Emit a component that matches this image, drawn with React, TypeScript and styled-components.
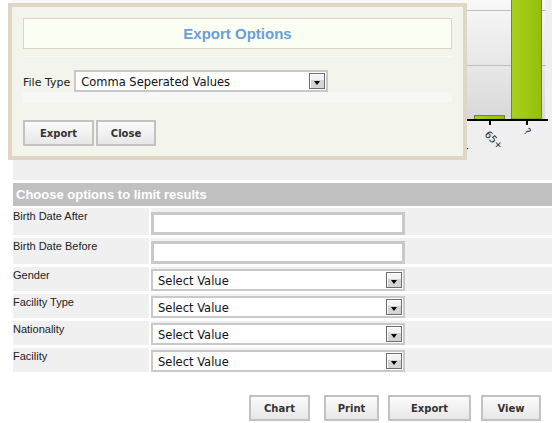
import React from 'react';
import styled, { createGlobalStyle } from 'styled-components';

const GlobalStyle = createGlobalStyle`
  body {
    margin: 0;
    background: #fff;
    font-family: "Liberation Sans", Arial, sans-serif;
  }
`

const Page = styled.div`
  position: relative;
  width: 552px;
`

const ChartBox = styled.div`
  height: 180px;
  margin-left: 13px;
  background: #efefef;
  overflow: hidden;

  svg {
    display: block;
  }
`

const Modal = styled.div`
  position: absolute;
  left: 8px;
  top: 3px;
  width: 459px;
  height: 157px;
  box-sizing: border-box;
  border: 4px solid #e1d6c5;
  background: #f3f4ec;
  padding: 11px 11px 0;
`

const TitleBox = styled.div`
  height: 31px;
  box-sizing: border-box;
  border: 1px solid #ddd4c4;
  background: #fbfef2;
  text-align: center;
  line-height: 29px;
  font-size: 15px;
  font-weight: bold;
  color: #6a9fd8;
`

const Divider = styled.div`
  height: 1px;
  margin-top: 7px;
  background: #f9f9f6;
`

const FileRow = styled.div`
  display: flex;
  align-items: center;
  margin-top: 13px;
`

const FileLabel = styled.span`
  font-family: "DejaVu Sans", Verdana, sans-serif;
  font-size: 11px;
  color: #222;
  margin-right: 4px;
  padding-top: 2px;
`

const Band = styled.div`
  height: 10px;
  background: #f7f7f7;
`

const ModalActions = styled.div`
  display: flex;
  gap: 2px;
  margin-top: 18px;
`

const Button = styled.button<{ $w: number; $gap?: number }>`
  width: ${p => p.$w}px;
  height: 26px;
  margin-left: ${p => p.$gap || 0}px;
  padding: 0;
  box-sizing: border-box;
  border: 2px solid #c2c2c2;
  background: linear-gradient(#fbfbfb, #e7e7e7);
  font-family: "DejaVu Sans", Verdana, sans-serif;
  font-size: 10px;
  font-weight: bold;
  color: #333;
`

const SelectBox = styled.div<{ $w: number; $h: number }>`
  position: relative;
  display: flex;
  align-items: center;
  width: ${p => p.$w}px;
  height: ${p => p.$h}px;
  box-sizing: border-box;
  border: 2px solid #c9c9c9;
  background: #fff;
  padding: 2px 0 0 5px;
  font-family: "DejaVu Sans", Verdana, sans-serif;
  font-size: 11.5px;
  color: #111;
`

const ArrowButton = styled.span`
  position: absolute;
  right: 1px;
  top: 1px;
  width: 16px;
  height: 16px;
  box-sizing: border-box;
  border: 1px solid #6e6e6e;
  box-shadow: inset 1px 1px 0 #fff;
  background: linear-gradient(#f3f3f3 0 40%, #d5d5d5 40%);
  display: flex;
  justify-content: center;
  align-items: flex-end;
  padding-bottom: 3px;

  &::after {
    content: '';
    border-left: 3px solid transparent;
    border-right: 3px solid transparent;
    border-top: 4px solid #000;
  }
`

const Header = styled.div`
  margin: 3px 0 0 13px;
  height: 23px;
  line-height: 23px;
  padding-left: 3px;
  background: #c0c0c0;
  color: #fff;
  font-size: 13px;
  font-weight: bold;
`

const Grid = styled.div`
  display: grid;
  grid-template-columns: 136px 1fr;
  column-gap: 2px;
  row-gap: 3px;
  margin: 2px 0 0 13px;
`

const Label = styled.div<{ $h: number }>`
  height: ${p => p.$h}px;
  background: #f0f0f0;
  padding-top: 2px;
  box-sizing: border-box;
  font-size: 11px;
  line-height: 13px;
  color: #222;
`

const Value = styled.div<{ $h: number; $pad: number }>`
  height: ${p => p.$h}px;
  background: #f0f0f0;
  padding-top: ${p => p.$pad}px;
  box-sizing: border-box;
`

const TextInput = styled.input`
  display: block;
  width: 254px;
  height: 23px;
  box-sizing: border-box;
  border: 3px solid #c9c9c9;
  background: #fff;
  margin: 0;
  outline: none;
`

const Actions = styled.div`
  display: flex;
  justify-content: flex-end;
  margin-top: 23px;
  padding-right: 11px;
`

const Select = ({ text, w, h }: { text: string; w: number; h: number }) => (
  <SelectBox $w={w} $h={h}>
    {text}
    <ArrowButton />
  </SelectBox>
)

const Chart = () => (
  <svg width={539} height={180}>
    <defs>
      <linearGradient id="plot" x1="0" y1="0" x2="0" y2="1">
        <stop offset="0" stopColor="#f8f8f8" />
        <stop offset="1" stopColor="#d9d9d9" />
      </linearGradient>
      <linearGradient id="bar" x1="0" y1="0" x2="1" y2="0">
        <stop offset="0" stopColor="#a8d11c" />
        <stop offset="1" stopColor="#93bf0c" />
      </linearGradient>
    </defs>
    <rect x={0} y={0} width={532} height={119} fill="url(#plot)" />
    <line x1={0} y1={10.5} x2={533} y2={10.5} stroke="#bdbdbd" />
    <line x1={0} y1={65.5} x2={533} y2={65.5} stroke="#bdbdbd" />
    <rect x={461.5} y={115.5} width={30} height={4} fill="url(#bar)" stroke="#6d8a25" />
    <rect x={498.5} y={-1} width={30} height={120} fill="url(#bar)" stroke="#6d8a25" />
    <rect x={0} y={119} width={535} height={2} fill="#000" />
    <rect x={476} y={121} width={2} height={4} fill="#000" />
    <rect x={513} y={121} width={2} height={4} fill="#000" />
    <text x={471} y={135} fontSize={10} fontFamily="DejaVu Sans, sans-serif" fill="#222" transform="rotate(45 471 135)">65+</text>
    <text x={510} y={132} fontSize={10} fontFamily="DejaVu Sans, sans-serif" fill="#222" transform="rotate(45 510 132)">?</text>
    <circle cx={454.5} cy={148.5} r={0.8} fill="#333" />
  </svg>
)

const rows = [
  { label: 'Birth Date After', kind: 'input', h: 27, pad: 4 },
  { label: 'Birth Date Before', kind: 'input', h: 26, pad: 3 },
  { label: 'Gender', kind: 'select', h: 24, pad: 2 },
  { label: 'Facility Type', kind: 'select', h: 24, pad: 2 },
  { label: 'Nationality', kind: 'select', h: 24, pad: 2 },
  { label: 'Facility', kind: 'select', h: 24, pad: 2 },
]

const App: React.FC = () => (
  <Page>
    <GlobalStyle />
    <ChartBox>
      <Chart />
    </ChartBox>

    <Modal>
      <TitleBox>Export Options</TitleBox>
      <Divider />
      <FileRow>
        <FileLabel>File Type</FileLabel>
        <Select text="Comma Seperated Values" w={254} h={22} />
      </FileRow>
      <Band />
      <ModalActions>
        <Button $w={71}>Export</Button>
        <Button $w={60}>Close</Button>
      </ModalActions>
    </Modal>

    <Header>Choose options to limit results</Header>
    <Grid>
      {rows.map(r => (
        <React.Fragment key={r.label}>
          <Label $h={r.h}>{r.label}</Label>
          <Value $h={r.h} $pad={r.pad}>
            {r.kind === 'input'
              ? <TextInput type="text" />
              : <Select text="Select Value" w={254} h={22} />}
          </Value>
        </React.Fragment>
      ))}
    </Grid>

    <Actions>
      <Button $w={61}>Chart</Button>
      <Button $w={55} $gap={14}>Print</Button>
      <Button $w={83} $gap={9}>Export</Button>
      <Button $w={60} $gap={10}>View</Button>
    </Actions>
  </Page>
)

export default App
